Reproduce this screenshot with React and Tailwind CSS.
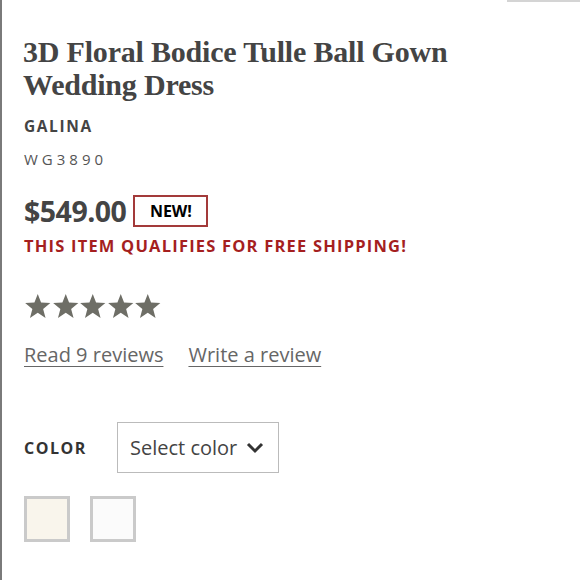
import React from "react";

function Star() {
  return (
    <svg width="27.5" height="27" viewBox="0 0 24 23" className="block">
      <path d="M12 0.5l2.9 7.6 8.1 0.4-6.3 5.1 2.1 7.9L12 17l-6.8 4.5 2.1-7.9L1 8.5l8.1-0.4z" fill="#6e6e66" />
    </svg>
  );
}

export default function App() {
  return (
    <div className="relative w-[580px] h-[580px] bg-white overflow-hidden" style={{ fontFamily: "'Open Sans', 'Liberation Sans', sans-serif" }}>
      <div className="absolute left-0 top-0 w-[2px] h-full bg-[#7a7a7a]" />
      <div className="absolute left-[507px] top-0 w-[73px] h-[2px] bg-[#d4d4d4]" />
      <div className="pl-[24px] pt-[35px] flex flex-col">
        <h1 className="text-[30px] leading-[33px] font-bold text-[#444] tracking-[-0.2px] -ml-[1px]" style={{ fontFamily: "'Liberation Serif', 'DejaVu Serif', serif" }}>
          3D Floral Bodice Tulle Ball Gown<br />Wedding Dress
        </h1>
        <div className="mt-[15px] text-[15.5px] leading-[20px] font-bold tracking-[1.6px] text-[#444]">GALINA</div>
        <div className="mt-[13px] text-[15px] leading-[20px] tracking-[4px] text-[#555]">WG3890</div>
        <div className="mt-[25px] flex items-center gap-[7px]">
          <span className="text-[28.5px] leading-[34px] font-bold text-[#444] tracking-[-0.5px]">$549.00</span>
          <span className="w-[75px] h-[32px] border-2 border-[#a33a3a] flex items-center justify-center text-[16px] font-bold text-black">NEW!</span>
        </div>
        <div className="mt-[7px] text-[16.5px] leading-[22px] font-bold tracking-[1.2px] text-[#a51f1f]">THIS ITEM QUALIFIES FOR FREE SHIPPING!</div>
        <div className="mt-[36px] flex">
          <Star /><Star /><Star /><Star /><Star />
        </div>
        <div className="mt-[22px] flex gap-[25px] text-[20px] leading-[26px] text-[#666]">
          <span className="underline underline-offset-[4px] decoration-1">Read 9 reviews</span>
          <span className="underline underline-offset-[4px] decoration-1">Write a review</span>
        </div>
        <div className="mt-[54px] flex items-center">
          <span className="w-[93px] text-[16px] font-bold tracking-[1.5px] text-[#333]">COLOR</span>
          <div className="w-[162px] h-[51px] border border-[#bbb] flex items-center pl-[12px] gap-[9px]">
            <span className="text-[20px] text-[#444]">Select color</span>
            <svg width="18" height="12" viewBox="0 0 18 12"><path d="M2 2l7 7 7-7" stroke="#333" strokeWidth="3" fill="none" /></svg>
          </div>
        </div>
        <div className="mt-[23px] flex gap-[20px]">
          <div className="w-[46px] h-[46px] border-[3px] border-[#cacaca] bg-[#f9f5ec]" />
          <div className="w-[46px] h-[46px] border-[3px] border-[#cacaca] bg-[#fbfbfb]" />
        </div>
      </div>
    </div>
  );
}
